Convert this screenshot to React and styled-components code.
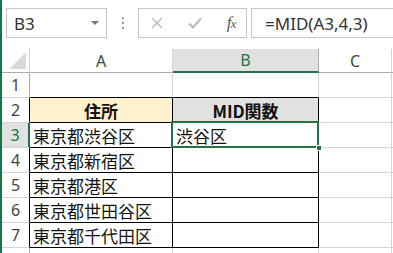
import React from 'react'
import styled, {createGlobalStyle, css} from 'styled-components'

const GlobalStyle = createGlobalStyle`
  html, body {
    margin: 0;
    padding: 0;
    background: #fff;
    overflow: hidden;
  }
  body {
    font-family: "Noto Sans", "Noto Sans CJK JP", sans-serif;
  }
`

const GREEN = '#217346'
const GRID = '#d4d4d4'
const HEAD_LINE = '#ababab'

const Frame = styled.div`
  width: 393px;
  height: 253px;
  box-sizing: border-box;
  border-left: 2px solid ${GREEN};
  background: #fff;
  overflow: hidden;
`

const FormulaBar = styled.div`
  display: flex;
  align-items: stretch;
  height: 30px;
  margin-top: 8px;
  padding-left: 4px;
`

const Box = styled.div`
  box-sizing: border-box;
  height: 30px;
  border: 1px solid #c6c6c6;
  display: flex;
  align-items: center;
  background: #fff;
`

const NameBox = styled(Box)`
  width: 101px;
  padding: 0 7px 0 7px;
  justify-content: space-between;
  font-size: 17px;
  color: #333;
`

const Caret = styled.span`
  width: 0;
  height: 0;
  border-left: 4px solid transparent;
  border-right: 4px solid transparent;
  border-top: 4px solid #777;
`

const Dots = styled.div`
  width: 31px;
  display: flex;
  flex-direction: column;
  align-items: center;
  justify-content: center;
  gap: 3px;

  span {
    width: 2px;
    height: 2px;
    background: #999;
  }
`

const ToolBox = styled(Box)`
  width: 109px;
  padding-left: 10px;
`

const ToolIcon = styled.span`
  width: ${p => p.$w}px;
  display: flex;
  justify-content: center;
  align-items: center;
`

const Fx = styled.span`
  font-family: "Liberation Serif", serif;
  font-style: italic;
  font-size: 17px;
  color: #555;
  letter-spacing: -1px;

  small {
    font-size: 13px;
  }
`

const FormulaInput = styled(Box)`
  flex: 1;
  margin-left: 4px;
  border-right: none;
  padding-left: 13px;
  font-size: 17px;
  color: #333;
`

const Sheet = styled.div`
  margin-top: 10px;
  display: grid;
  grid-template-columns: 28px 143px 146px 73px 1fr;
  grid-auto-rows: 25px;
`

const Corner = styled.div`
  box-sizing: border-box;
  border-right: 1px solid ${GRID};
  border-bottom: 1px solid ${HEAD_LINE};
  display: flex;
  align-items: flex-end;
  justify-content: flex-end;
  padding: 0 3px 3px 0;
`

const Triangle = styled.span`
  width: 0;
  height: 0;
  border-left: 17px solid transparent;
  border-bottom: 17px solid #dadada;
`

const ColHead = styled.div`
  box-sizing: border-box;
  display: flex;
  align-items: center;
  justify-content: center;
  font-size: 16px;
  color: #444;
  border-right: 1px solid ${GRID};
  border-bottom: 1px solid ${HEAD_LINE};
  margin-top: 1px;
  ${p => p.$active && css`
    background: #e1e1e1;
    color: ${GREEN};
    border-right-color: ${HEAD_LINE};
    border-bottom: 2px solid ${GREEN};
  `}
`

const RowHead = styled.div`
  box-sizing: border-box;
  display: flex;
  align-items: center;
  justify-content: center;
  font-size: 16px;
  color: #444;
  border-right: 1px solid ${p => (p.$dark ? '#000' : HEAD_LINE)};
  border-bottom: 1px solid ${GRID};
  ${p => p.$active && css`
    background: #e1e1e1;
    color: ${GREEN};
    border-right: 2px solid ${GREEN};
  `}
`

const Cell = styled.div`
  box-sizing: border-box;
  position: relative;
  display: flex;
  align-items: center;
  padding-left: 3px;
  font-family: "Noto Sans CJK JP", sans-serif;
  font-size: 17px;
  color: #111;
  white-space: nowrap;
  border-right: 1px solid ${p => (p.$boxed ? '#000' : GRID)};
  border-bottom: 1px solid ${p => (p.$boxed || p.$above ? '#000' : GRID)};
  background: ${p => p.$fill || 'transparent'};
  ${p => p.$head && css`
    justify-content: center;
    padding-left: 0;
    font-weight: 700;
  `}
  ${p => p.$selected && css`
    &::after {
      content: '';
      position: absolute;
      left: -2px;
      top: -2px;
      right: -1px;
      bottom: -1px;
      border: 2px solid ${GREEN};
      pointer-events: none;
    }
    &::before {
      content: '';
      position: absolute;
      right: -4px;
      bottom: -4px;
      width: 6px;
      height: 6px;
      background: ${GREEN};
      border: 1px solid #fff;
      box-sizing: border-box;
      z-index: 2;
    }
  `}
`

const rows = [
  {n: 1, a: '', b: ''},
  {n: 2, a: '住所', b: 'MID関数', head: true},
  {n: 3, a: '東京都渋谷区', b: '渋谷区'},
  {n: 4, a: '東京都新宿区', b: ''},
  {n: 5, a: '東京都港区', b: ''},
  {n: 6, a: '東京都世田谷区', b: ''},
  {n: 7, a: '東京都千代田区', b: ''},
  {n: 8, a: '', b: '', hidden: true},
]

export default function App() {
  return (
    <>
      <GlobalStyle />
      <Frame>
        <FormulaBar>
          <NameBox>
            <span>B3</span>
            <Caret />
          </NameBox>
          <Dots>
            <span />
            <span />
            <span />
          </Dots>
          <ToolBox>
            <ToolIcon $w={16}>
              <svg width="12" height="12" viewBox="0 0 12 12">
                <path d="M1 1L11 11M11 1L1 11" stroke="#b9b9b9" strokeWidth="1.4" />
              </svg>
            </ToolIcon>
            <ToolIcon $w={60}>
              <svg width="14" height="12" viewBox="0 0 14 12">
                <path d="M1 6.5L5 10.5L13 1.5" stroke="#b9b9b9" strokeWidth="2" fill="none" />
              </svg>
            </ToolIcon>
            <ToolIcon $w={12}>
              <Fx>f<small>x</small></Fx>
            </ToolIcon>
          </ToolBox>
          <FormulaInput>=MID(A3,4,3)</FormulaInput>
        </FormulaBar>
        <Sheet>
          <Corner>
            <Triangle />
          </Corner>
          <ColHead>A</ColHead>
          <ColHead $active>B</ColHead>
          <ColHead>C</ColHead>
          <ColHead />
          {rows.map(r => {
            const inTable = r.n >= 2 && r.n <= 7
            return (
              <React.Fragment key={r.n}>
                <RowHead $active={r.n === 3} $dark={inTable}>
                  {r.hidden ? null : r.n}
                </RowHead>
                <Cell
                  $boxed={inTable}
                  $above={r.n === 1}
                  $head={r.head}
                  $fill={r.head ? '#fff2cc' : undefined}
                >
                  {r.a}
                </Cell>
                <Cell
                  $boxed={inTable}
                  $above={r.n === 1}
                  $head={r.head}
                  $selected={r.n === 3}
                  $fill={r.head ? '#e1e1e1' : undefined}
                >
                  {r.b}
                </Cell>
                <Cell />
                <Cell />
              </React.Fragment>
            )
          })}
        </Sheet>
      </Frame>
    </>
  )
}
